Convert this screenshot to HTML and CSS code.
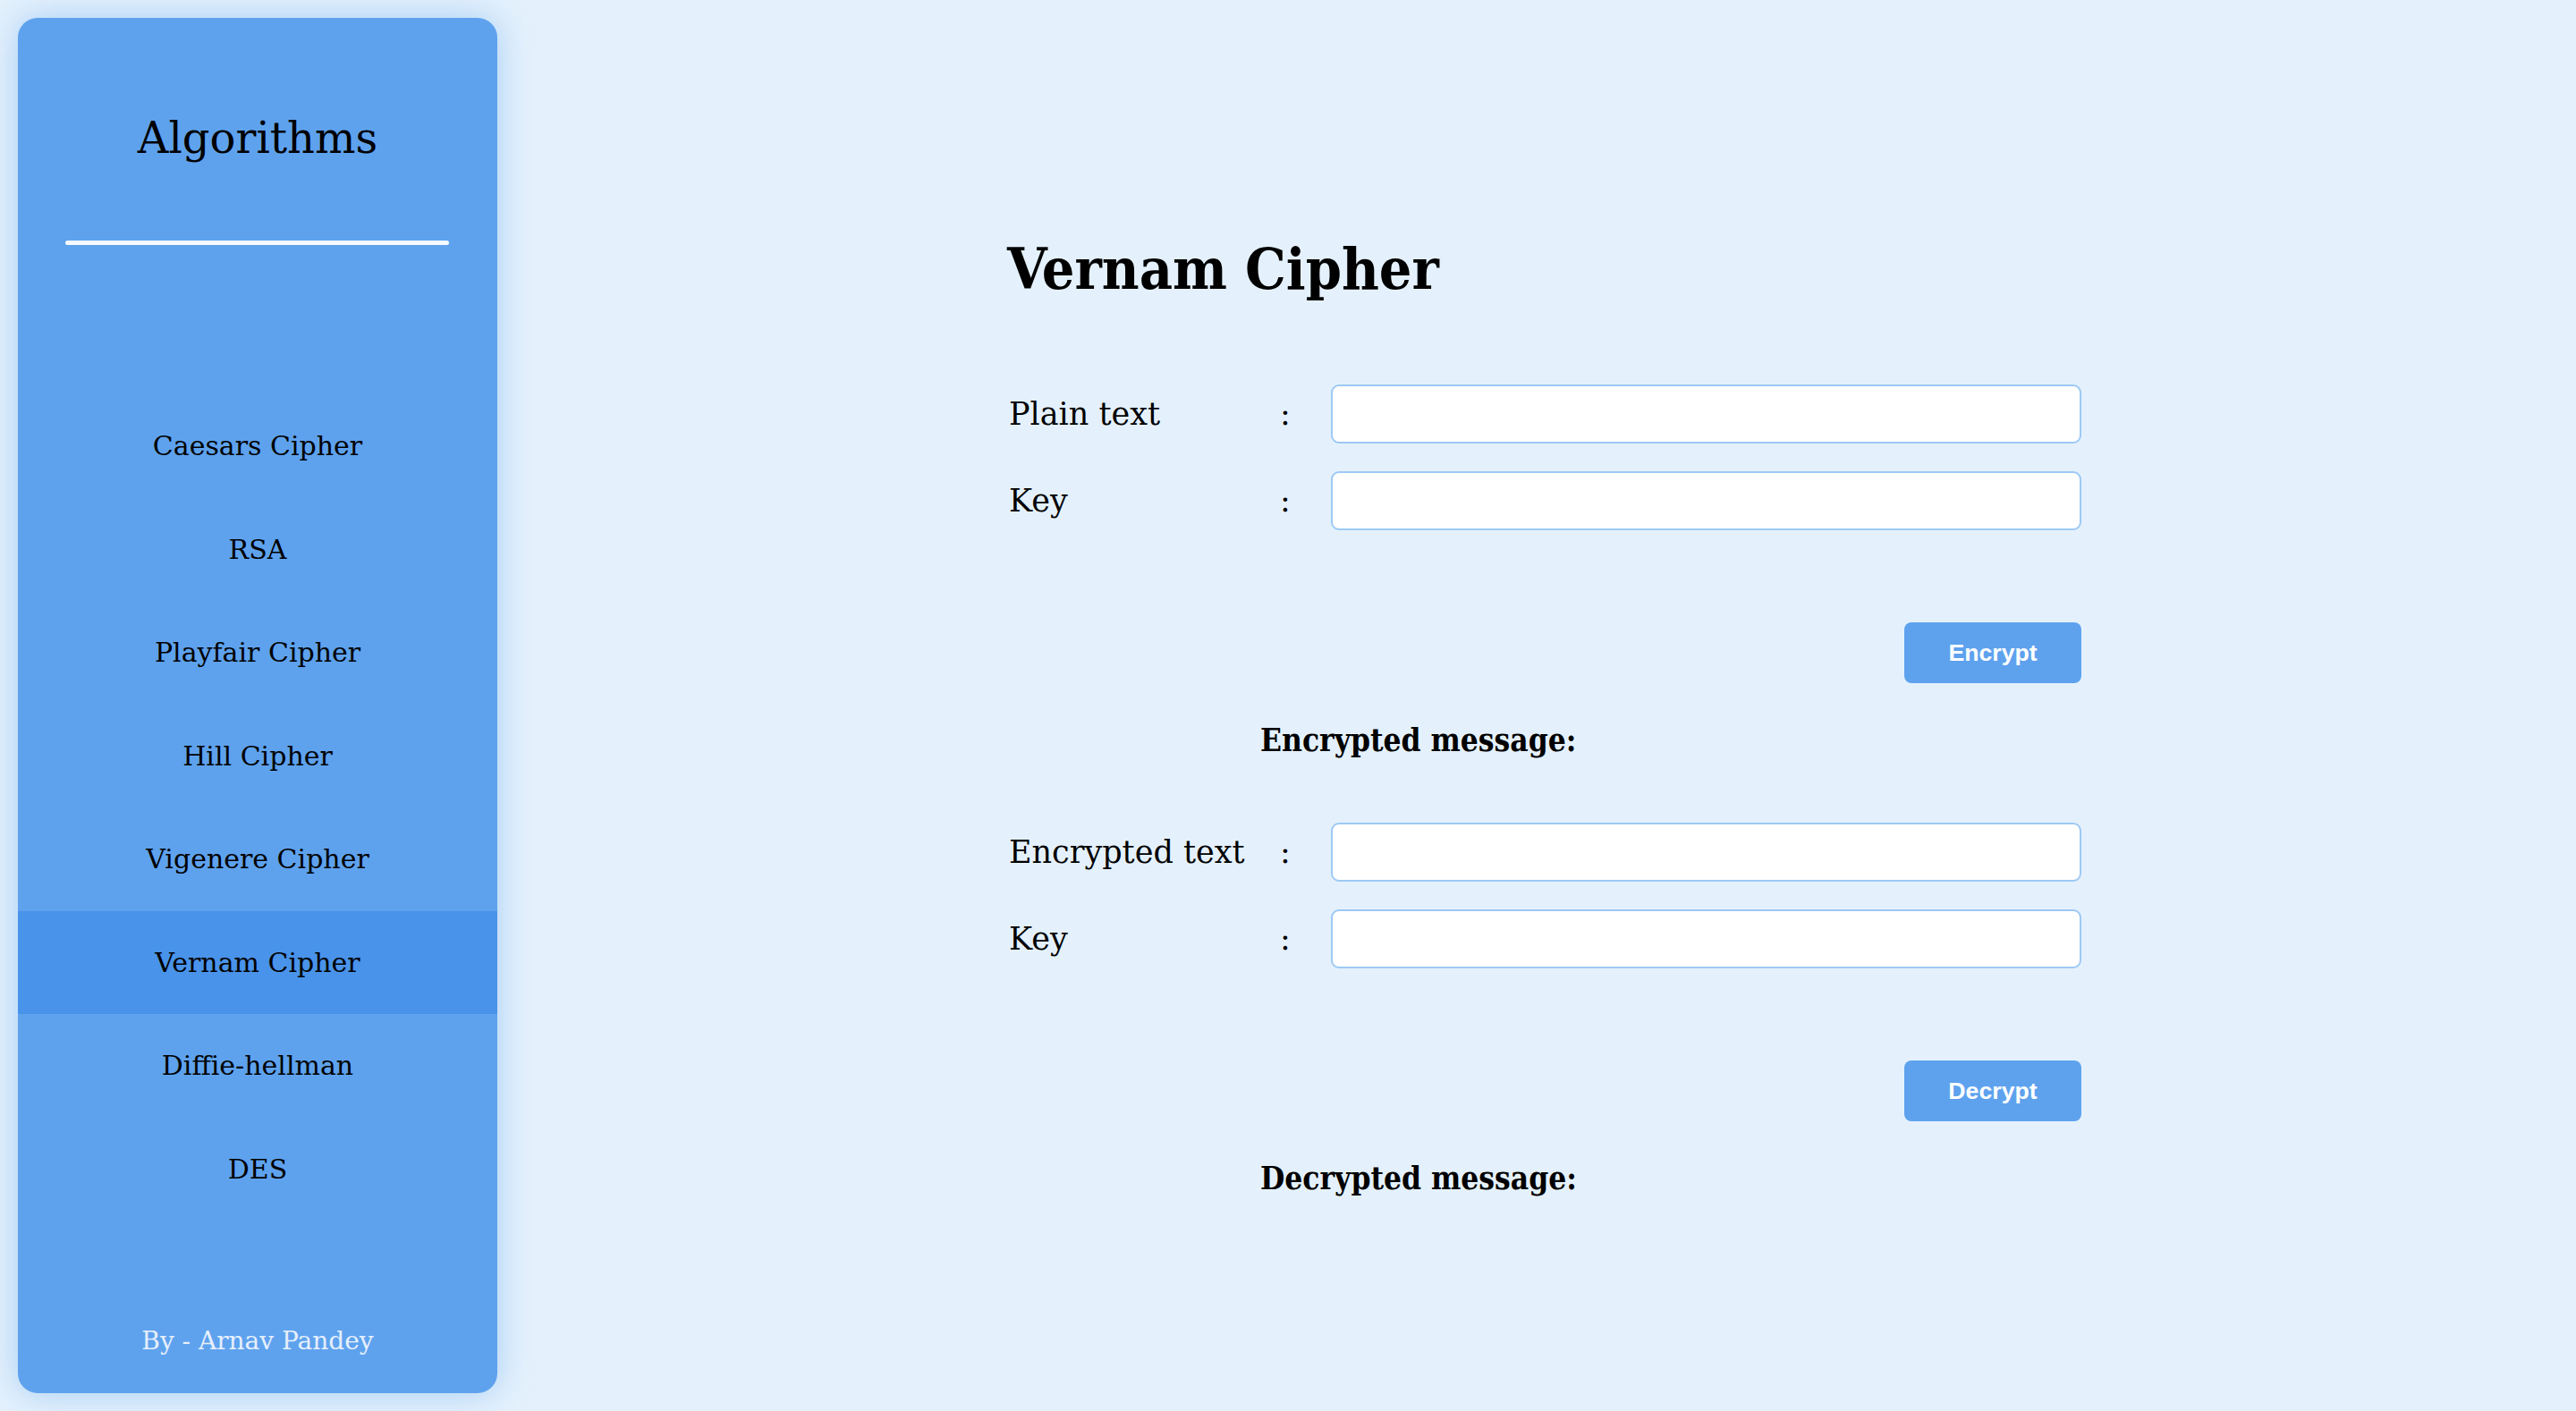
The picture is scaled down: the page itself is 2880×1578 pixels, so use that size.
FILE: index.html
```html
<!DOCTYPE html>
<html lang="en">
<head>
<meta charset="utf-8">
<title>Vernam Cipher</title>
<link rel="stylesheet" href="styles.css">
</head>
<body>
<div class="page">
  <aside class="sidebar">
    <h2 class="side-title">Algorithms</h2>
    <div class="side-rule"></div>
    <nav class="nav">
      <a class="nav-item" href="#">Caesars Cipher</a>
      <a class="nav-item" href="#">RSA</a>
      <a class="nav-item" href="#">Playfair Cipher</a>
      <a class="nav-item" href="#">Hill Cipher</a>
      <a class="nav-item" href="#">Vigenere Cipher</a>
      <a class="nav-item active" href="#">Vernam Cipher</a>
      <a class="nav-item" href="#">Diffie-hellman</a>
      <a class="nav-item" href="#">DES</a>
    </nav>
    <div class="side-footer">By - Arnav Pandey</div>
  </aside>
  <main class="main">
    <div class="content">
      <h1 class="heading">Vernam Cipher</h1>
      <div class="field first">
        <label class="label">Plain text</label>
        <span class="colon">:</span>
        <input class="input" type="text">
      </div>
      <div class="field">
        <label class="label">Key</label>
        <span class="colon">:</span>
        <input class="input" type="text">
      </div>
      <div class="actions"><button class="btn">Encrypt</button></div>
      <div class="message">Encrypted message:</div>
      <div class="field second">
        <label class="label">Encrypted text</label>
        <span class="colon">:</span>
        <input class="input" type="text">
      </div>
      <div class="field">
        <label class="label">Key</label>
        <span class="colon">:</span>
        <input class="input" type="text">
      </div>
      <div class="actions"><button class="btn">Decrypt</button></div>
      <div class="message">Decrypted message:</div>
    </div>
  </main>
</div>
</body>
</html>
```
FILE: styles.css
```css
* { box-sizing: border-box; }
html, body { margin: 0; padding: 0; }
body {
  background: #e4f1fc;
  font-family: "DejaVu Serif", "Liberation Serif", serif;
  color: #000;
}
.page {
  display: flex;
  height: 100vh;
}
.sidebar {
  flex: 0 0 536px;
  margin: 20px;
  margin-right: 0;
  background: #5ea2ee;
  border-radius: 22px;
  box-shadow: 0 0 36px rgba(94, 162, 238, 0.45);
  display: flex;
  flex-direction: column;
  overflow: hidden;
}
.side-title {
  margin: 0;
  padding-top: 100px;
  font-size: 48px;
  line-height: 68px;
  font-weight: normal;
  text-align: center;
}
.side-rule {
  margin: 81px 54px 0 53px;
  height: 5px;
  border-radius: 3px;
  background: #f6faff;
}
.nav {
  margin-top: 167px;
  display: flex;
  flex-direction: column;
}
.nav-item {
  height: 115.5px;
  display: flex;
  align-items: center;
  justify-content: center;
  color: #000;
  text-decoration: none;
  font-size: 30px;
}
.nav-item.active { background: #4993ea; }
.side-footer {
  margin-top: auto;
  padding-bottom: 38px;
  text-align: center;
  font-size: 28px;
  line-height: 40px;
  color: #e6effb;
}
.main {
  flex: 1;
  padding-left: 570px;
}
.content {
  width: 1201px;
  padding-top: 258px;
}
.heading {
  margin: 0;
  font-size: 64px;
  line-height: 85px;
  font-weight: bold;
  font-stretch: condensed;
}
.field {
  display: flex;
  align-items: center;
  margin-top: 31px;
}
.field.first { margin-top: 87px; }
.field.second { margin-top: 70px; }
.label {
  width: 305px;
  font-size: 35px;
  padding-left: 2px;
}
.colon {
  width: 57px;
  font-size: 35px;
}
.input {
  width: 839px;
  height: 66px;
  border: 2px solid #9dc9f5;
  border-radius: 9px;
  background: #fff;
  outline: none;
}
.actions {
  display: flex;
  justify-content: flex-end;
  margin-top: 103px;
}
.btn {
  width: 198px;
  height: 68px;
  border: none;
  border-radius: 8px;
  background: #5ea2ee;
  color: #fff;
  font-family: "Liberation Sans", Arial, sans-serif;
  font-weight: bold;
  font-size: 26.67px;
}
.message {
  margin-top: 41px;
  padding-left: 283px;
  font-size: 35px;
  line-height: 45px;
  font-weight: bold;
  font-stretch: condensed;
}
```
